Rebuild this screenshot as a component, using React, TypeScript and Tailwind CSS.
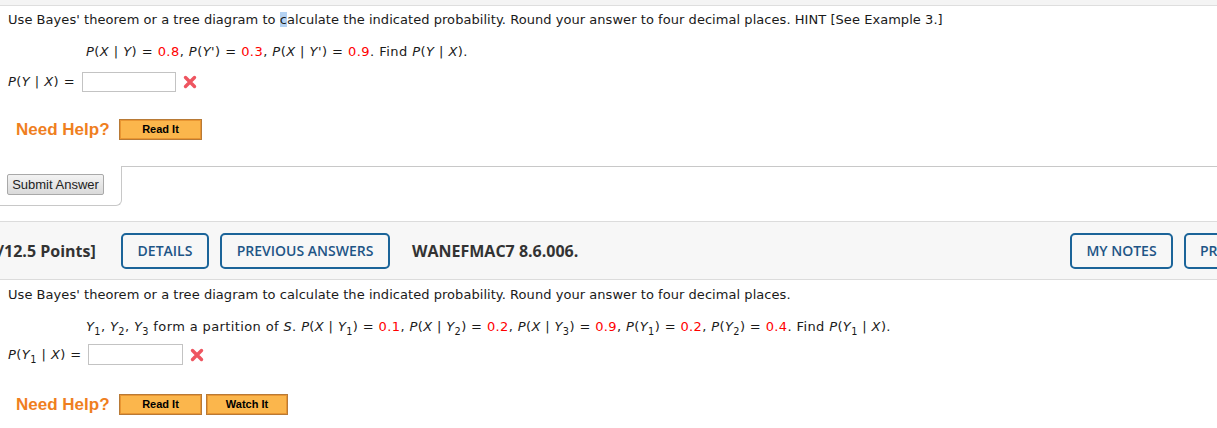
import React from "react";

const V = { fontFamily: '"DejaVu Sans", Verdana, sans-serif' };
const A = { fontFamily: '"Liberation Sans", Arial, sans-serif' };
const O = { fontFamily: '"Open Sans", sans-serif' };

function R({ children }: { children: React.ReactNode }) {
  return <span className="text-[#ff0000]">{children}</span>;
}
function I({ children }: { children: React.ReactNode }) {
  return <i>{children}</i>;
}
function S({ children }: { children: React.ReactNode }) {
  return <sub className="-bottom-[4px]">{children}</sub>;
}

function RedX() {
  return (
    <svg width="14" height="14" viewBox="0 0 14 14" className="shrink-0">
      <path d="M2.5 2.5 L11.5 11.5 M11.5 2.5 L2.5 11.5" stroke="#ee5560" strokeWidth="3.4" strokeLinecap="round" />
    </svg>
  );
}

function HelpBtn({ label, w }: { label: string; w: string }) {
  return (
    <button
      className={`${w} h-[21px] border border-[#b87a36] bg-[#fbb64c] shadow-[inset_0_0_0_1px_#e99632] text-[11px] font-bold text-black leading-none flex items-center justify-center`}
      style={A}
    >
      {label}
    </button>
  );
}

function NeedHelp({ children }: { children: React.ReactNode }) {
  return (
    <div className="flex items-center h-[21px] pl-[16px]">
      <span className="text-[17px] leading-none font-bold text-[#ef7f1f] w-[103px] whitespace-nowrap" style={A}>
        Need Help?
      </span>
      <div className="flex gap-[4px]">{children}</div>
    </div>
  );
}

function BlueBtn({ label, w, left }: { label: string; w: string; left?: boolean }) {
  return (
    <button
      className={`${w} h-[36px] shrink-0 rounded-[5px] border-2 border-[#1b6499] text-[14px] font-semibold text-[#1e5586] flex items-center whitespace-nowrap ${
        left ? "justify-start pl-[14px]" : "justify-center"
      }`}
      style={O}
    >
      {label}
    </button>
  );
}

export default function App() {
  return (
    <div className="w-[1217px] h-[428px] overflow-hidden bg-white text-[13px] text-[#1a1a1a]" style={V}>
      <div className="h-[6px] bg-[#f4f4f4] border-b border-[#dedede]" />

      {/* Question 1 */}
      <div className="mt-[6px] h-[16px] leading-[16px] pl-[8px] whitespace-nowrap tracking-[0.05px]">
        Use Bayes' theorem or a tree diagram to <span className="bg-[#b5d3f3]">c</span>alculate the indicated
        probability. Round your answer to four decimal places. HINT [See Example 3.]
      </div>
      <div className="mt-[16px] h-[16px] leading-[16px] pl-[86px] whitespace-nowrap tracking-[0.45px]">
        <I>P</I>(<I>X</I> | <I>Y</I>) = <R>0.8</R>, <I>P</I>(<I>Y</I>') = <R>0.3</R>, <I>P</I>(<I>X</I> | <I>Y</I>') ={" "}
        <R>0.9</R>. Find <I>P</I>(<I>Y</I> | <I>X</I>).
      </div>
      <div className="mt-[12px] h-[20px] flex items-center pl-[8px]">
        <span className="w-[74px] whitespace-nowrap tracking-[0.45px]">
          <I>P</I>(<I>Y</I> | <I>X</I>) =
        </span>
        <div className="w-[94px] h-[20px] border border-[#c3c3c3] bg-white" />
        <div className="ml-[7px]">
          <RedX />
        </div>
      </div>
      <div className="mt-[27px]">
        <NeedHelp>
          <HelpBtn label="Read It" w="w-[83px]" />
        </NeedHelp>
      </div>

      {/* Submit tab */}
      <div className="mt-[26px] flex">
        <div className="w-[122px] h-[40px] border-r border-b border-[#c8c8c8] rounded-br-[6px] pt-[8px] pl-[7px]">
          <button
            className="w-[97px] h-[21px] border border-[#a9a9a9] rounded-[2px] bg-gradient-to-b from-[#f3f3f3] to-[#dadada] text-[13px] text-[#222] leading-none flex items-center justify-center"
            style={{ fontFamily: '"Liberation Sans", Helvetica, Arial, sans-serif' }}
          >
            Submit Answer
          </button>
        </div>
        <div className="flex-1 border-t border-[#c8c8c8]" />
      </div>

      {/* Header bar */}
      <div className="mt-[15px] h-[59px] border-y border-[#dcdcdc] bg-[#f7f7f7] overflow-hidden">
        <div className="w-[1400px] h-full flex items-center ml-[-13px]" style={O}>
          <span className="text-[16px] font-bold text-[#333] whitespace-nowrap w-[134px]">[-/12.5 Points]</span>
          <BlueBtn label="DETAILS" w="w-[88px]" />
          <div className="ml-[11px]">
            <BlueBtn label="PREVIOUS ANSWERS" w="w-[170px]" />
          </div>
          <span className="ml-[22px] text-[16px] font-bold text-[#333] whitespace-nowrap">WANEFMAC7 8.6.006.</span>
          <div className="ml-auto flex gap-[11px] mr-[25px]">
            <BlueBtn label="MY NOTES" w="w-[103px]" />
            <BlueBtn label="PRACTICE ANOTHER" w="w-[178px]" left />
          </div>
        </div>
      </div>

      {/* Question 2 */}
      <div className="mt-[7px] h-[16px] leading-[16px] pl-[8px] whitespace-nowrap tracking-[0.05px]">
        Use Bayes' theorem or a tree diagram to calculate the indicated probability. Round your answer to four decimal
        places.
      </div>
      <div className="mt-[16px] h-[16px] leading-[16px] pl-[86px] whitespace-nowrap tracking-[0.38px]">
        <I>Y</I>
        <S>1</S>, <I>Y</I>
        <S>2</S>, <I>Y</I>
        <S>3</S> form a partition of <I>S</I>. <I>P</I>(<I>X</I> | <I>Y</I>
        <S>1</S>) = <R>0.1</R>, <I>P</I>(<I>X</I> | <I>Y</I>
        <S>2</S>) = <R>0.2</R>, <I>P</I>(<I>X</I> | <I>Y</I>
        <S>3</S>) = <R>0.9</R>, <I>P</I>(<I>Y</I>
        <S>1</S>) = <R>0.2</R>, <I>P</I>(<I>Y</I>
        <S>2</S>) = <R>0.4</R>. Find <I>P</I>(<I>Y</I>
        <S>1</S> | <I>X</I>).
      </div>
      <div className="mt-[9px] h-[21px] flex items-center pl-[8px]">
        <span className="w-[80px] whitespace-nowrap tracking-[0.45px]">
          <I>P</I>(<I>Y</I>
          <S>1</S> | <I>X</I>) =
        </span>
        <div className="w-[95px] h-[21px] border border-[#c3c3c3] bg-white" />
        <div className="ml-[7px]">
          <RedX />
        </div>
      </div>
      <div className="mt-[29px]">
        <NeedHelp>
          <HelpBtn label="Read It" w="w-[83px]" />
          <HelpBtn label="Watch It" w="w-[82px]" />
        </NeedHelp>
      </div>
    </div>
  );
}
